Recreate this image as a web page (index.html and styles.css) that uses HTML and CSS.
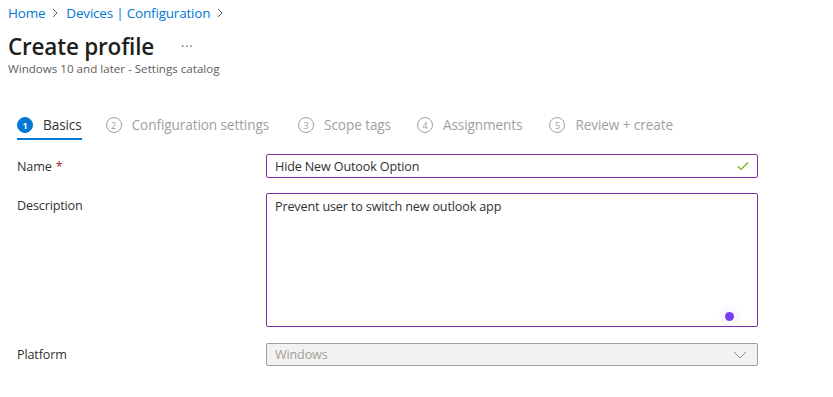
FILE: index.html
```html
<!DOCTYPE html>
<html lang="en">
<head>
  <meta charset="UTF-8">
  <meta name="viewport" content="width=device-width, initial-scale=1.0">
  <title>Create profile</title>
  <link rel="stylesheet" href="styles.css">
</head>
<body>
  <nav class="crumbs">
    <a href="#">Home</a>
    <svg class="chev" width="8" height="10" viewBox="0 0 8 10"><path d="M2 1l4 4-4 4" fill="none" stroke="#605e5c" stroke-width="1"/></svg>
    <a href="#">Devices | Configuration</a>
    <svg class="chev" width="8" height="10" viewBox="0 0 8 10"><path d="M2 1l4 4-4 4" fill="none" stroke="#605e5c" stroke-width="1"/></svg>
  </nav>

  <div class="head">
    <h1 class="title">Create profile</h1>
    <span class="more">···</span>
  </div>
  <p class="sub">Windows 10 and later - Settings catalog</p>

  <ul class="steps">
    <li class="step on"><span class="num">1</span>Basics</li>
    <li class="step"><span class="num">2</span>Configuration settings</li>
    <li class="step"><span class="num">3</span>Scope tags</li>
    <li class="step"><span class="num">4</span>Assignments</li>
    <li class="step"><span class="num">5</span>Review + create</li>
  </ul>

  <div class="form">
    <label class="lbl">Name <span class="req">*</span></label>
    <div class="field input">
      <span>Hide New Outook Option</span>
      <svg class="ok" width="12" height="10" viewBox="0 0 12 10"><path d="M1 5.5l3.2 3L11 1.5" fill="none" stroke="#6bb700" stroke-width="1.2"/></svg>
    </div>

    <label class="lbl lbl-top">Description</label>
    <div class="field area">
      <span>Prevent user to switch new outlook app</span>
      <span class="dot"></span>
    </div>

    <label class="lbl">Platform</label>
    <div class="field select">
      <span>Windows</span>
      <svg class="down" width="14" height="8" viewBox="0 0 14 8"><path d="M1 1l6 6 6-6" fill="none" stroke="#8a8886" stroke-width="1"/></svg>
    </div>
  </div>
</body>
</html>
```

FILE: styles.css
```css
* {margin: 0;padding: 0;list-style: none;box-sizing: border-box;}
body {font-family: "Open Sans", "Noto Sans", sans-serif; color: #323130; background: #fff; padding-left: 8px;}

.crumbs {display: flex; align-items: center; height: 24px; padding-top: 1px; font-size: 13.5px;}
.crumbs a {color: #0078d4; text-decoration: none; letter-spacing: -0.2px;}
.chev {margin: 0 7px 0 6px;}

.head {display: flex; align-items: center; margin-top: 7px; height: 30px;}
.title {font-size: 22.5px; font-weight: 600; letter-spacing: -0.2px; color: #201f1e;}
.more {margin-left: 27px; font-size: 12px; color: #605e5c; letter-spacing: 1px;}
.sub {font-size: 11.6px; color: #605e5c; margin-top: 0; letter-spacing: 0;}

.steps {display: flex; margin-top: 37px; padding-left: 9px; height: 27px;}
.step {display: flex; align-items: flex-start; padding-top: 2px; margin-right: 24px; font-size: 13.6px; color: #a19f9d; letter-spacing: -0.1px;}
.step:nth-child(2) {margin-right: 29px;}
.step:nth-child(3) {margin-right: 26px;}
.step:nth-child(4) {margin-right: 27px;}
.num {width: 16px; height: 16px; border-radius: 50%; border: 1px solid #a19f9d; font-size: 9px; display: flex; align-items: center; justify-content: center; margin: 2px 10px 0 0; letter-spacing: 0;}
.step.on {color: #323130; font-weight: 500; border-bottom: 2px solid #0078d4; margin-right: 24px;}
.step.on .num {background: #0078d4; border-color: #0078d4; color: #fff; font-weight: 700;}

.form {display: grid; grid-template-columns: 249px 492px; row-gap: 15px; padding-left: 9px; margin-top: 14px; font-size: 12.6px; letter-spacing: -0.15px;}
.lbl {display: flex; align-items: center; color: #323130;}
.lbl-top {align-items: flex-start; padding-top: 4px;}
.req {color: #a4262c; margin-left: 4px;}
.field {display: flex; align-items: center; justify-content: space-between; border: 1px solid #8a2da5; border-radius: 2px; padding: 0 8px; position: relative;}
.input {height: 24px;}
.ok {margin-right: 0;}
.area {height: 134px; align-items: flex-start; padding-top: 4px;}
.dot {position: absolute; right: 23px; bottom: 5px; width: 9px; height: 9px; border-radius: 50%; background: #7a3ff0; box-shadow: 0 0 0 6px rgba(122, 63, 240, 0.04);}
.select {height: 23px; margin-top: 1px; background: #f3f2f1; border-color: #a19f9d; color: #a19f9d;}
.down {margin-right: 2px;}
```
